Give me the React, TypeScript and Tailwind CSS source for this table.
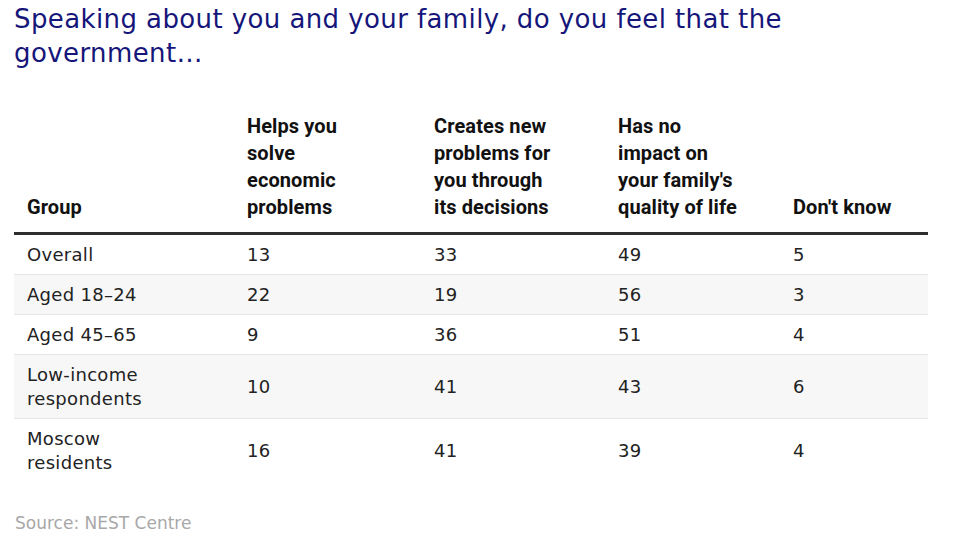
const headers: string[][] = [
  ['Group'],
  ['Helps you', 'solve', 'economic', 'problems'],
  ['Creates new', 'problems for', 'you through', 'its decisions'],
  ['Has no', 'impact on', "your family's", 'quality of life'],
  ["Don't know"],
];

const rows: { group: string[]; values: number[] }[] = [
  { group: ['Overall'], values: [13, 33, 49, 5] },
  { group: ['Aged 18–24'], values: [22, 19, 56, 3] },
  { group: ['Aged 45–65'], values: [9, 36, 51, 4] },
  { group: ['Low-income', 'respondents'], values: [10, 41, 43, 6] },
  { group: ['Moscow', 'residents'], values: [16, 41, 39, 4] },
];

const cols = 'grid grid-cols-[220px_187px_184px_175px_148px]';

export default function App() {
  return (
    <div className="w-[966px] h-[546px] bg-white overflow-hidden px-[14px] pt-[2px]">
      <h1 className="text-[26px] leading-[34px] text-[#16167a] font-['DejaVu_Sans',sans-serif] tracking-[0.4px]">
        Speaking about you and your family, do you feel that the
        <br />
        government…
      </h1>

      <div className="mt-[43px] w-[914px]">
        {/* header */}
        <div className={`${cols} border-b-[3px] border-[#2e2e2e] font-['Roboto',sans-serif] font-bold text-[20px] leading-[27px] text-[#111] tracking-[0.1px]`}>
          {headers.map((h, i) => (
            <div key={i} className="px-[13px] pb-[11px] flex flex-col justify-end">
              {h.map((line) => (
                <span key={line} className="block whitespace-nowrap">
                  {line}
                </span>
              ))}
            </div>
          ))}
        </div>

        {/* body */}
        {rows.map((r, i) => (
          <div
            key={i}
            className={`${cols} items-center font-['DejaVu_Sans',sans-serif] text-[18px] leading-[24px] text-[#222] tracking-[0.3px] ${
              i % 2 === 1 ? 'bg-[#f7f7f7]' : 'bg-white'
            } ${i < rows.length - 1 ? 'border-b border-[#e6e6e6]' : ''} py-[7.5px]`}
          >
            <div className="px-[13px]">
              {r.group.map((g) => (
                <span key={g} className="block">
                  {g}
                </span>
              ))}
            </div>
            {r.values.map((v, j) => (
              <div key={j} className="px-[13px]">
                {v}
              </div>
            ))}
          </div>
        ))}
      </div>

      <p className="mt-[29px] text-[17px] leading-[24px] text-[#a8a8a8] font-['DejaVu_Sans',sans-serif] px-[1px]">
        Source: NEST Centre
      </p>
    </div>
  );
}
